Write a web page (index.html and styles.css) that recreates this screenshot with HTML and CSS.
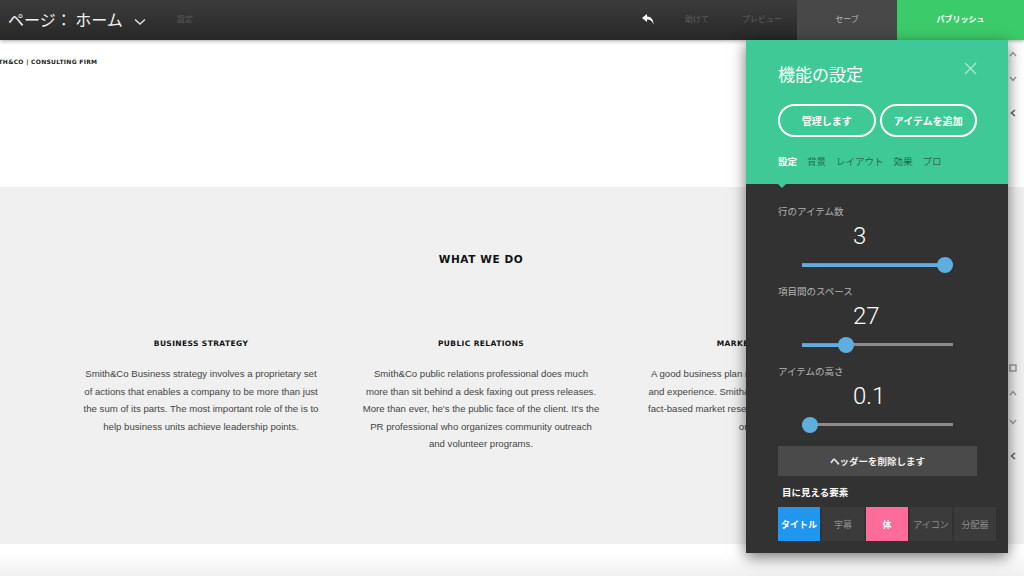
FILE: index.html
```html
<!DOCTYPE html>
<html lang="ja">
<head>
   <meta charset="UTF-8">
   <meta name="viewport" content="width=device-width, initial-scale=1.0">
   <title>ページ：ホーム</title>
   <link rel="stylesheet" href="styles.css">
</head>
<body>
   <div class="topbar">
      <div class="page-name">ページ： ホーム</div>
      <svg class="chevron" width="12" height="8" viewBox="0 0 12 8"><path d="M1 1.5 L6 6 L11 1.5" fill="none" stroke="#ddd" stroke-width="1.6"/></svg>
      <div class="page-settings">設定</div>
      <div class="actions">
         <svg class="undo" width="13" height="11" viewBox="0 0 13 11"><path d="M5 0 L0 4 L5 8 L5 5.5 C8 5.5 10 6.5 11.5 10.5 C11.5 5.5 9 2.8 5 2.6 Z" fill="#fff"/></svg>
         <span class="action">助けて</span>
         <span class="action">プレビュー</span>
         <div class="save">セーブ</div>
         <div class="publish">パブリッシュ</div>
      </div>
   </div>

   <div class="site">
      <section class="header-section">
         <div class="logo">SMITH&amp;CO | CONSULTING FIRM</div>
         <div class="tools">
            <svg class="t-up" width="8" height="6" viewBox="0 0 8 6"><path d="M1 5 L4 1.5 L7 5" fill="none" stroke="#999" stroke-width="1.3"/></svg>
            <svg class="t-down" width="8" height="6" viewBox="0 0 8 6"><path d="M1 1 L4 4.5 L7 1" fill="none" stroke="#999" stroke-width="1.3"/></svg>
            <svg class="t-back" width="8" height="8" viewBox="0 0 8 8"><path d="M6 1 L2.5 4 L6 7" fill="none" stroke="#666" stroke-width="1.6"/></svg>
         </div>
      </section>

      <section class="services">
         <div class="inner">
            <h2>WHAT WE DO</h2>
            <div class="columns">
               <div class="col">
                  <h3>BUSINESS STRATEGY</h3>
                  <p>Smith&amp;Co Business strategy involves a proprietary set of actions that enables a company to be more than just the sum of its parts. The most important role of the is to help business units achieve leadership points.</p>
               </div>
               <div class="col">
                  <h3>PUBLIC RELATIONS</h3>
                  <p>Smith&amp;Co public relations professional does much more than sit behind a desk faxing out press releases. More than ever, he's the public face of the client. It's the PR professional who organizes community outreach and volunteer programs.</p>
               </div>
               <div class="col">
                  <h3>MARKET RESEARCH</h3>
                  <p>A good business plan requires research, knowledge and experience. Smith&amp;Co offers its clients accurate, fact-based market research from an expert team who organizes.</p>
               </div>
            </div>
         </div>
         <div class="tools tools-low">
            <svg class="t-box" width="8" height="8" viewBox="0 0 8 8"><rect x="1" y="1" width="6" height="6" fill="none" stroke="#888" stroke-width="1.2"/></svg>
            <svg class="t-up" width="8" height="6" viewBox="0 0 8 6"><path d="M1 5 L4 1.5 L7 5" fill="none" stroke="#999" stroke-width="1.3"/></svg>
            <svg class="t-down" width="8" height="6" viewBox="0 0 8 6"><path d="M1 1 L4 4.5 L7 1" fill="none" stroke="#999" stroke-width="1.3"/></svg>
            <svg class="t-back" width="8" height="8" viewBox="0 0 8 8"><path d="M6 1 L2.5 4 L6 7" fill="none" stroke="#666" stroke-width="1.6"/></svg>
         </div>
      </section>

      <section class="footer-section"></section>
   </div>

   <div class="panel">
      <div class="panel-head">
         <div class="panel-title">
            <span>機能の設定</span>
            <svg class="close" width="13" height="13" viewBox="0 0 13 13"><path d="M1 1 L12 12 M12 1 L1 12" stroke="rgba(255,255,255,0.6)" stroke-width="1.2"/></svg>
         </div>
         <div class="pill-row">
            <button class="pill">管理します</button>
            <button class="pill">アイテムを追加</button>
         </div>
         <div class="tabs">
            <span class="tab active">設定</span>
            <span class="tab">背景</span>
            <span class="tab">レイアウト</span>
            <span class="tab">効果</span>
            <span class="tab">プロ</span>
         </div>
      </div>
      <div class="panel-body">
         <div class="field">
            <div class="field-label">行のアイテム数</div>
            <div class="field-value">3</div>
            <div class="slider"><div class="fill" style="width: 143px"></div><div class="thumb" style="left: 135px"></div></div>
         </div>
         <div class="field">
            <div class="field-label">項目間のスペース</div>
            <div class="field-value">27</div>
            <div class="slider"><div class="fill" style="width: 44px"></div><div class="thumb" style="left: 36px"></div></div>
         </div>
         <div class="field">
            <div class="field-label">アイテムの高さ</div>
            <div class="field-value">0.1</div>
            <div class="slider"><div class="fill" style="width: 8px"></div><div class="thumb" style="left: 0px"></div></div>
         </div>
         <button class="wide-btn">ヘッダーを削除します</button>
         <div class="visible-label">目に見える要素</div>
         <div class="toggles">
            <div class="toggle blue">タイトル</div>
            <div class="toggle">字幕</div>
            <div class="toggle pink">体</div>
            <div class="toggle">アイコン</div>
            <div class="toggle">分配器</div>
         </div>
      </div>
      <div class="caret"></div>
   </div>
</body>
</html>
```

FILE: styles.css
```css
body {
   margin: 0;
   width: 1024px;
   height: 576px;
   overflow: hidden;
   font-family: "Noto Sans CJK JP", sans-serif;
   background: #fff;
   position: relative;
}
.topbar {
   height: 40px;
   display: flex;
   align-items: center;
   background: linear-gradient(#3c3c3c, #272727);
   box-shadow: 0 1px 4px rgba(0, 0, 0, 0.35);
   position: relative;
   z-index: 2;
}
.page-name {
   color: #f2f2f2;
   font-size: 16px;
   margin-left: 8px;
   margin-top: -3px;
}
.chevron {
   margin-left: 11px;
   margin-top: 3px;
}
.page-settings {
   color: #5a5a5a;
   font-size: 8px;
   margin-left: 31px;
   margin-top: -4px;
}
.actions {
   margin-left: auto;
   display: flex;
   align-items: center;
   height: 100%;
}
.undo {
   margin-right: 30px;
   margin-top: -2px;
}
.action {
   color: #606060;
   font-size: 8px;
   margin-right: 33px;
   margin-top: -3px;
}
.action:last-of-type {
   margin-right: 15px;
}
.save,
.publish {
   height: 100%;
   display: flex;
   align-items: center;
   justify-content: center;
   font-size: 8px;
   padding-bottom: 3px;
   box-sizing: border-box;
}
.save {
   width: 100px;
   background: #484848;
   color: #b8b8b8;
}
.publish {
   width: 127px;
   background: #3ccb6a;
   color: #fff;
   font-weight: 700;
}

.site {
   width: 1024px;
}
.header-section {
   height: 147px;
   position: relative;
   background: #fff;
}
.logo {
   font-family: "DejaVu Sans", sans-serif;
   font-weight: 700;
   font-size: 6px;
   letter-spacing: 0.3px;
   color: #222;
   margin-left: -15px;
   padding-top: 18px;
}
.tools {
   position: absolute;
   left: 1009px;
   top: 11px;
   display: flex;
   flex-direction: column;
}
.tools svg {
   display: block;
}
.header-section .t-down {
   margin-top: 19px;
}
.header-section .t-back {
   margin-top: 27px;
}
.tools-low {
   top: 177px;
}
.tools-low .t-up {
   margin-top: 18px;
}
.tools-low .t-down {
   margin-top: 23px;
}
.tools-low .t-back {
   margin-top: 27px;
}
.services {
   height: 357px;
   background: #f0f0f0;
   position: relative;
}
.inner {
   width: 840px;
   margin-left: 61px;
   padding-top: 64px;
}
.services h2 {
   margin: 0;
   text-align: center;
   font-family: "DejaVu Sans", sans-serif;
   font-size: 10.5px;
   letter-spacing: 0.6px;
   color: #111;
   line-height: 16px;
}
.columns {
   display: grid;
   grid-template-columns: repeat(3, 280px);
   margin-top: 71px;
}
.col {
   text-align: center;
}
.col h3 {
   margin: 0;
   font-family: "DejaVu Sans", sans-serif;
   font-size: 7.5px;
   letter-spacing: 0.4px;
   color: #111;
   line-height: 12px;
}
.col p {
   margin: 15px auto 0;
   width: 236.7px;
   font-family: "Liberation Sans", Arial, sans-serif;
   font-size: 9.62px;
   line-height: 17.5px;
   color: #444;
}
.footer-section {
   height: 32px;
   background: linear-gradient(#fff 30%, #f0f0f0);
}

.panel {
   position: absolute;
   left: 746px;
   top: 40px;
   width: 262px;
   z-index: 3;
   box-shadow: 0 4px 14px rgba(0, 0, 0, 0.55);
}
.panel-head {
   background: #3fc997;
   padding: 22px 31px 16px 32px;
}
.panel-title {
   display: flex;
   justify-content: space-between;
   align-items: center;
   color: #fff;
   font-size: 17px;
   line-height: 24px;
}
.close {
   margin-top: -12px;
}
.pill-row {
   display: flex;
   gap: 4px;
   margin-top: 18px;
}
.pill {
   width: 98px;
   height: 33px;
   border: 2px solid #fff;
   border-radius: 17px;
   background: transparent;
   color: #fff;
   font-family: "Noto Sans CJK JP", sans-serif;
   font-size: 10px;
   font-weight: 700;
   padding: 0;
}
.tabs {
   display: flex;
   gap: 10px;
   margin-top: 17px;
   font-size: 9.5px;
   line-height: 14px;
}
.tab {
   color: rgba(0, 0, 0, 0.5);
}
.tab.active {
   color: #fff;
   font-weight: 700;
}
.caret {
   position: absolute;
   left: 32px;
   top: 144px;
   width: 0;
   height: 0;
   border-left: 4px solid transparent;
   border-right: 4px solid transparent;
   border-top: 4px solid #3fc997;
}
.panel-body {
   background: #323232;
   padding: 20px 31px 12px 32px;
}
.field {
   margin-bottom: 11px;
}
.field-label {
   color: #b4b4b4;
   font-size: 9.5px;
   line-height: 14px;
}
.field-value {
   font-family: Roboto, sans-serif;
   font-weight: 300;
   color: #fff;
   font-size: 24px;
   line-height: 28px;
   margin-top: 4px;
   padding-left: 75px;
}
.slider {
   position: relative;
   height: 16px;
   width: 151px;
   margin: 7px 0 0 24px;
   background: linear-gradient(transparent 6.5px, #8c8c8c 6.5px, #8c8c8c 9.5px, transparent 9.5px);
}
.fill {
   position: absolute;
   left: 0;
   top: 6.5px;
   height: 3px;
   background: #5eaee0;
}
.thumb {
   position: absolute;
   top: 0;
   width: 16px;
   height: 16px;
   border-radius: 50%;
   background: #5eaee0;
}
.wide-btn {
   display: block;
   width: 199px;
   height: 30px;
   margin-top: 13px;
   border: none;
   background: #4a4a4a;
   color: #f0f0f0;
   font-family: "Noto Sans CJK JP", sans-serif;
   font-size: 9.5px;
   font-weight: 700;
}
.visible-label {
   color: #fff;
   font-size: 9.5px;
   font-weight: 700;
   line-height: 14px;
   margin: 9px 0 0 4px;
}
.toggles {
   display: flex;
   gap: 2px;
   margin-top: 8px;
   width: 218px;
}
.toggle {
   width: 42px;
   height: 34px;
   flex: none;
   display: flex;
   align-items: center;
   justify-content: center;
   background: #3b3b3b;
   color: #8e8e8e;
   font-size: 9px;
}
.toggle.blue {
   background: #2196ef;
   color: #fff;
   font-weight: 700;
}
.toggle.pink {
   background: #ff6b9a;
   color: #fff;
   font-weight: 700;
}
```
